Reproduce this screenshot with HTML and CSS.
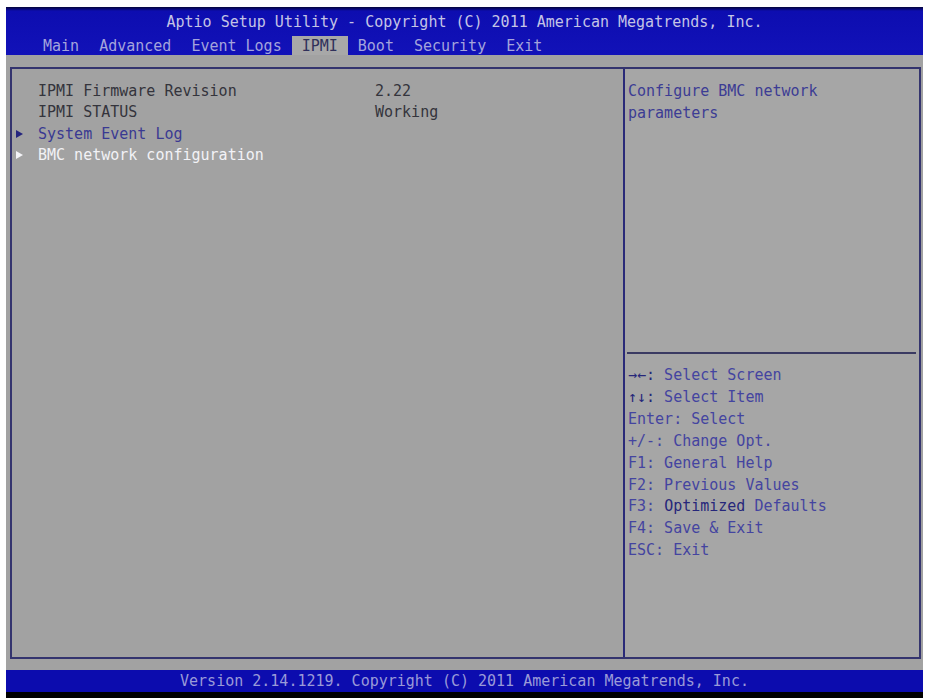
FILE: index.html
```html
<!DOCTYPE html>
<html lang="en">
<head>
  <meta charset="UTF-8">
  <title>Aptio Setup Utility</title>
  <link rel="stylesheet" href="styles.css">
</head>
<body>

<div class="screen">
  <div class="header">
    <div class="title">Aptio Setup Utility - Copyright (C) 2011 American Megatrends, Inc.</div>
    <div class="tabs">
      <span class="tab">Main</span>
      <span class="tab">Advanced</span>
      <span class="tab">Event Logs</span>
      <span class="tab active">IPMI</span>
      <span class="tab">Boot</span>
      <span class="tab">Security</span>
      <span class="tab">Exit</span>
    </div>
  </div>

  <div class="main">
    <div class="panel">
      <div class="left">
        <div class="row">
          <span class="label">IPMI Firmware Revision</span>
          <span class="value">2.22</span>
        </div>
        <div class="row">
          <span class="label">IPMI STATUS</span>
          <span class="value">Working</span>
        </div>
        <div class="row submenu">
          <span class="arrow"></span>
          <span class="label">System Event Log</span>
        </div>
        <div class="row submenu selected">
          <span class="arrow"></span>
          <span class="label">BMC network configuration</span>
        </div>
      </div>

      <div class="right">
        <div class="help-top">
          Configure BMC network<br>
          parameters
        </div>
        <div class="divider"></div>
        <div class="keys">
          <div><span class="key">&rarr;&larr;:</span> Select Screen</div>
          <div><span class="key">&uarr;&darr;:</span> Select Item</div>
          <div>Enter: Select</div>
          <div>+/-: Change Opt.</div>
          <div>F1: General Help</div>
          <div>F2: Previous Values</div>
          <div>F3: <span class="key">Optimized</span> Defaults</div>
          <div>F4: Save &amp; Exit</div>
          <div>ESC: Exit</div>
        </div>
      </div>
    </div>
  </div>

  <div class="footer">Version 2.14.1219. Copyright (C) 2011 American Megatrends, Inc.</div>
  <div class="bottom"></div>
</div>

</body>
</html>
```

FILE: styles.css
```css
body {
  margin: 0;
  background: #fff;
  font-family: "DejaVu Sans Mono", "Liberation Mono", monospace;
  font-size: 15px;
}
.screen {
  margin: 7px 9px 0 6px;
  height: 691px;
  display: flex;
  flex-direction: column;
}
.header {
  height: 48px;
  background: linear-gradient(#05053a 0, #0d0db0 4px, #1212b8 100%);
  display: flex;
  flex-direction: column;
}
.title {
  text-align: center;
  color: #c4c4e6;
  height: 27px;
  line-height: 27px;
  padding-top: 2px;
}
.tabs {
  display: flex;
  padding-left: 27px;
  height: 21px;
  margin-top: auto;
}
.tab {
  color: #a4a4dc;
  padding: 0 10px;
  line-height: 21px;
}
.active {
  background: #a8a8a8;
  color: #30305a;
}
.main {
  flex: 1;
  background: #a2a2a2;
  padding: 12px 2px 11px 4px;
  display: flex;
}
.panel {
  flex: 1;
  display: flex;
  border: 2px solid #34346e;
}
.left {
  width: 607px;
  border-right: 2px solid #2a2a78;
  padding: 11px 0 0 4px;
}
.row {
  display: flex;
  align-items: center;
  height: 21.5px;
  padding-left: 22px;
  color: #34343c;
}
.label {
  width: 337px;
}
.value {
  color: #34343c;
}
.submenu {
  padding-left: 0;
  color: #3a3a92;
}
.arrow {
  width: 0;
  height: 0;
  border-top: 4px solid transparent;
  border-bottom: 4px solid transparent;
  border-left: 7px solid #24247e;
  margin-right: 15px;
}
.selected {
  color: #f2f2f6;
}
.selected .arrow {
  border-left-color: #f4f4f8;
}
.right {
  flex: 1;
  display: flex;
  flex-direction: column;
  background: #a6a6a6;
}
.help-top {
  height: 271px;
  padding: 12px 0 0 3px;
  color: #3c3c94;
  line-height: 21.5px;
}
.divider {
  height: 2px;
  background: #3a3a62;
  margin: 0 3px 0 2px;
}
.keys {
  padding: 11px 0 0 3px;
  color: #4444a0;
  line-height: 21.9px;
}
.key {
  color: #26267a;
}
.footer {
  height: 22px;
  background: #0c0cae;
  color: #9a9ad8;
  text-align: center;
  line-height: 22px;
}
.bottom {
  height: 6px;
  background: #000;
}
```
